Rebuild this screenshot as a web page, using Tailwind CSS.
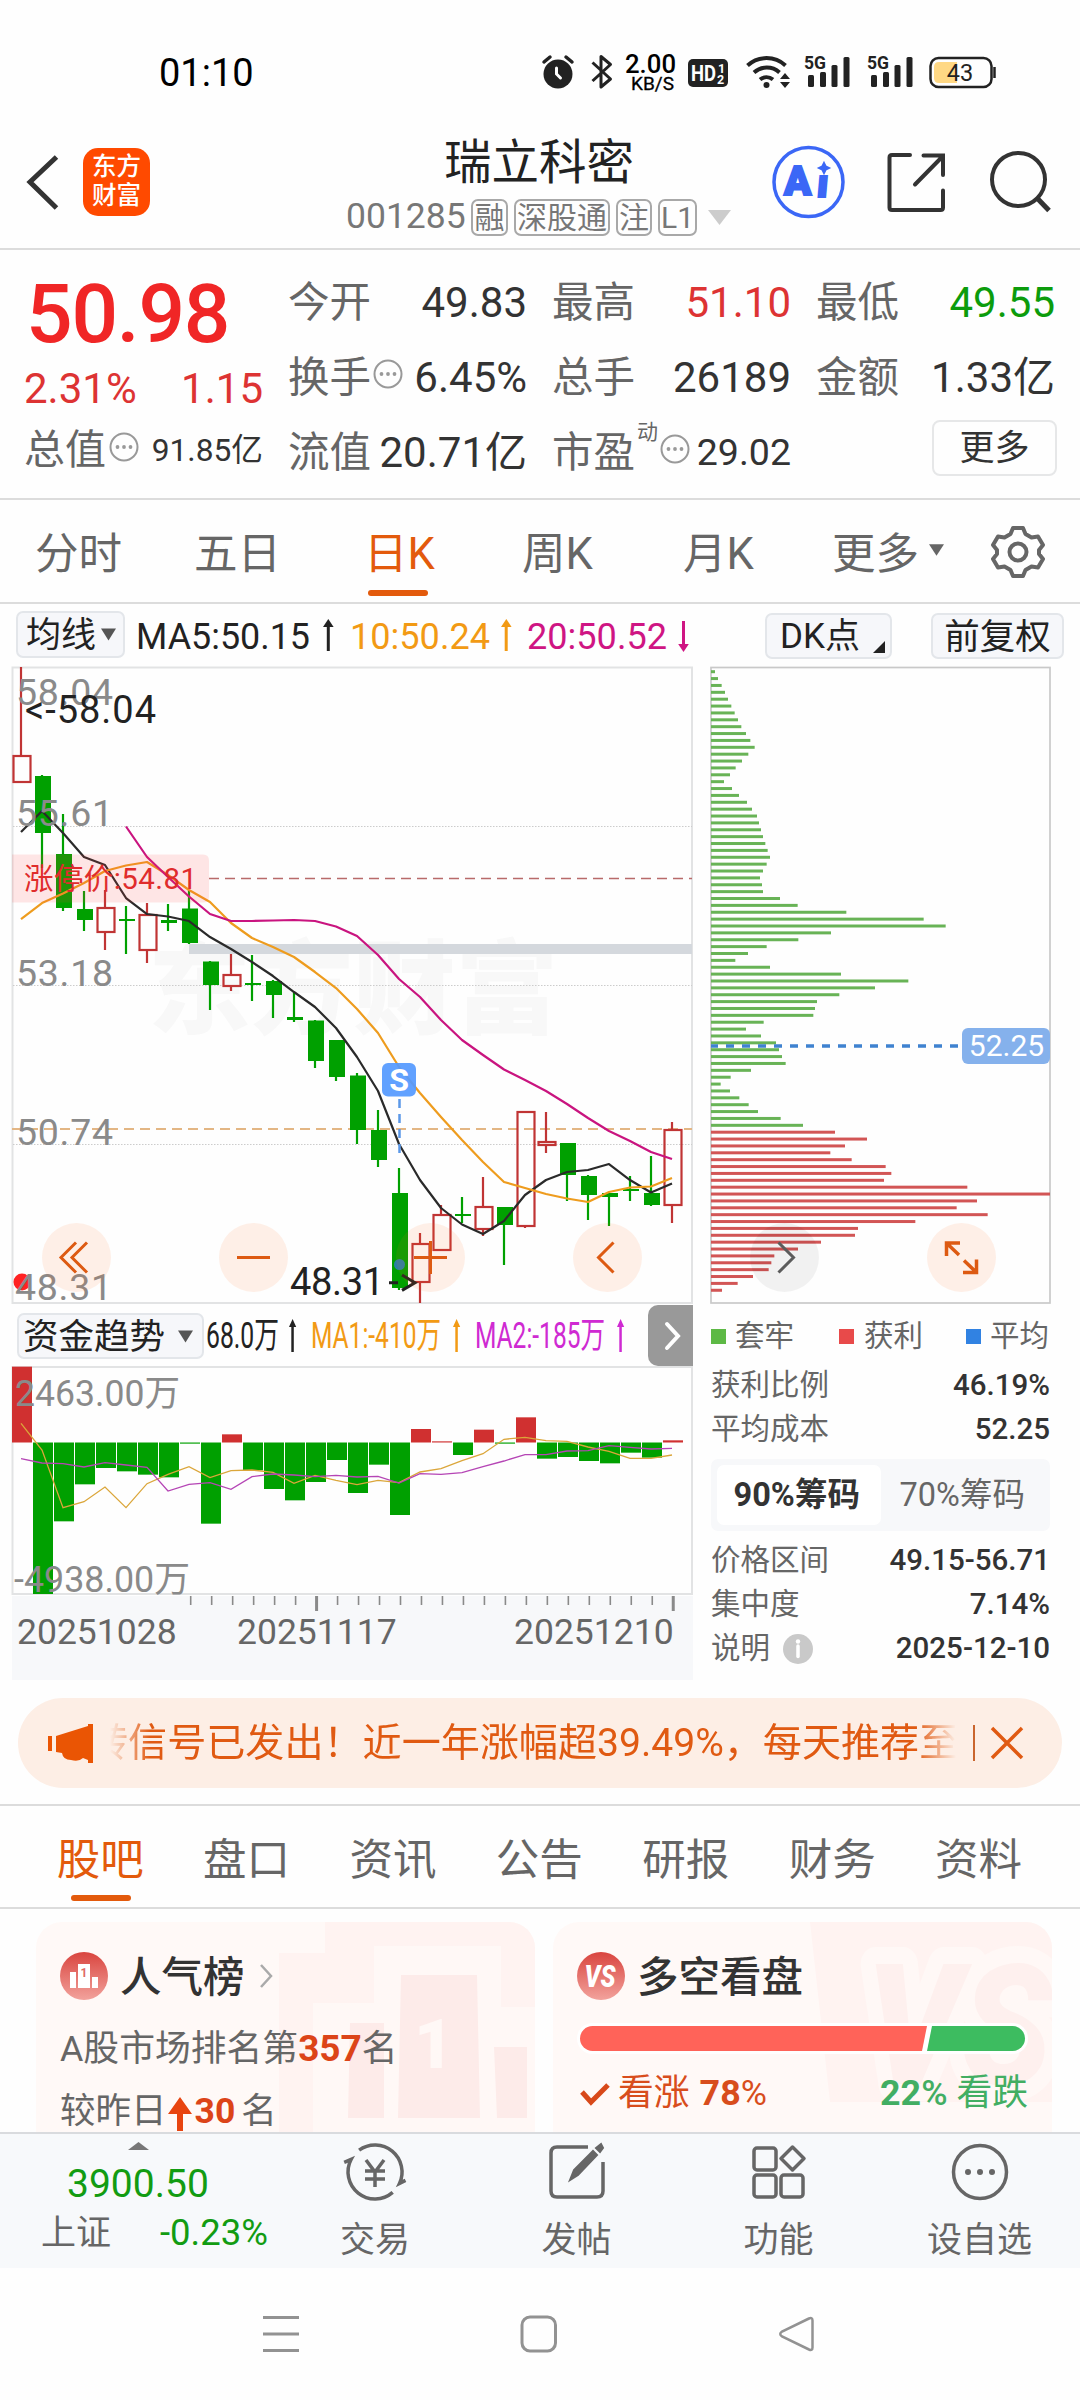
<!DOCTYPE html>
<html lang="zh-CN">
<head>
<meta charset="utf-8">
<title>瑞立科密 001285</title>
<script src="https://cdn.jsdelivr.net/npm/@tailwindcss/browser@4"></script>
</head>
<body class="bg-[#fefefe]">
<div class="w-[1080px] h-[2400px] overflow-hidden flex flex-col leading-none whitespace-nowrap text-[#666] font-['Roboto','Noto_Sans_CJK_SC',sans-serif]">

  <!-- status bar -->
  <div class="h-[122px] pt-[48px] pl-[159px] flex items-start">
    <div class="w-[379px] pt-[6px] text-[38px] text-black">01:10</div>
    <svg class="w-[470px] h-[52px]" viewBox="538 48 470 52" fill="none">
      <circle cx="558" cy="74" r="14.5" fill="#222"/>
      <path d="M544 62l6-5M572 62l-6-5" stroke="#222" stroke-width="3.5" stroke-linecap="round"/>
      <path d="M556.500 68v6l4 4" stroke="#fff" stroke-width="3" stroke-linecap="round"/>
      <path d="M592.500 62.500l18 16.500-9.500 8V56.500l9.500 8-18 16.500" stroke="#222" stroke-width="3" stroke-linejoin="round"/>
      <text x="625" y="73" font-size="25" font-weight="500" fill="#000" textLength="51" lengthAdjust="spacingAndGlyphs">2.00</text>
      <text x="631" y="90" font-size="18.500" fill="#000" stroke="#000" stroke-width=".3" textLength="43" lengthAdjust="spacingAndGlyphs">KB/S</text>
      <rect x="688" y="59" width="40" height="28" rx="5" fill="#222"/>
      <text x="691" y="81" font-size="22" font-weight="700" fill="#fff" textLength="25" lengthAdjust="spacingAndGlyphs">HD</text>
      <text x="718" y="73" font-size="12.500" font-weight="700" fill="#fff">1</text>
      <text x="717" y="84" font-size="12.500" font-weight="700" fill="#fff">2</text>
      <path d="M747.500 65.500a28 28 0 0 1 38 0M754 72.500a19 19 0 0 1 25.500 0M760 79.500a10.500 10.500 0 0 1 13 0" stroke="#222" stroke-width="4"/>
      <circle cx="766.500" cy="85" r="3" fill="#222"/>
      <path d="M780 79l5-6 5 6zM780 82l5 6 5-6z" fill="#222"/>
      <g fill="#222">
        <text x="804" y="69" font-size="18.500" font-weight="700" textLength="22" lengthAdjust="spacingAndGlyphs">5G</text>
        <rect x="808" y="75" width="6" height="12" rx="1.500"/><rect x="820" y="72" width="6" height="15" rx="1.500"/><rect x="831.500" y="65" width="6" height="22" rx="1.500"/><rect x="843.500" y="57" width="6" height="30" rx="1.500"/>
        <text x="867" y="69" font-size="18.500" font-weight="700" textLength="22" lengthAdjust="spacingAndGlyphs">5G</text>
        <rect x="871" y="75" width="6" height="12" rx="1.500"/><rect x="883" y="72" width="6" height="15" rx="1.500"/><rect x="894.500" y="65" width="6" height="22" rx="1.500"/><rect x="906.500" y="57" width="6" height="30" rx="1.500"/>
      </g>
      <rect x="930.500" y="58" width="61" height="29" rx="8" stroke="#222" stroke-width="2.500"/>
      <path d="M957 62h-18q-5 0-5 5v11q0 5 5 5h18z" fill="#ffd884"/>
      <path d="M994.500 67v11" stroke="#222" stroke-width="2.500"/>
      <text x="960" y="81" font-size="23.500" fill="#222" text-anchor="middle">43</text>
    </svg>
  </div>

  <!-- title bar -->
  <header class="h-[128px] border-b-2 border-[#dcdcdc] flex">
    <svg class="w-[83px] h-[126px]" viewBox="0 122 83 126" fill="none"><path d="M56.500 157L30 182l26.500 26" stroke="#333" stroke-width="5"/></svg>
    <div class="mt-[26px] w-[67px] h-[68px] rounded-[15px] bg-[#ff4a00] text-white font-medium text-[24.500px] leading-[29px] pt-[4px] text-center">东方<br>财富</div>
    <div class="ml-[196px] w-[387px] flex flex-col">
      <div class="text-[47.5px] text-[#222] pt-[18px] pl-[98px]">瑞立科密</div>
      <div class="mt-[11px] flex items-center text-[#777]">
        <span class="text-[35.5px] w-[125px] text-[#777]">001285</span>
        <div class="flex gap-[6px] text-[30px] *:h-[37px] *:border-2 *:border-[#a8a8a8] *:rounded-[7px] *:leading-[34px] *:text-center">
          <span class="w-[37px]">融</span><span class="w-[96px]">深股通</span><span class="w-[36px]">注</span><span class="w-[39px]">L1</span>
        </div>
        <svg class="ml-[11px] w-[23px] h-[15px]" viewBox="0 0 23 15"><path d="M0 0h23L11.500 15z" fill="#ccc"/></svg>
      </div>
    </div>
    <svg class="w-[340px] h-[126px]" viewBox="733 122 340 126" fill="none">
      <circle cx="808.500" cy="182" r="34.500" stroke="#3b67f6" stroke-width="3.500"/>
      <g fill="#3b67f6" stroke="#3b67f6" stroke-width="2" font-size="40" font-weight="900"><text x="784" y="195">A</text><text transform="translate(816 197) skewX(-5)">ı</text></g>
      <path d="M824 162.500l1.800 3.700 3.700 1.800-3.700 1.800-1.800 3.700-1.800-3.700-3.700-1.800 3.700-1.800z" fill="#3b67f6" stroke="#3b67f6" stroke-width="1.500"/>
      <path d="M910 155h-18q-2.500 0-2.500 2.500v50q0 2.500 2.500 2.500h48.500q2.500 0 2.500-2.500v-17M915 184.500l28-28.500M923.500 155.500h19.500v19.500" stroke="#333" stroke-width="4" stroke-linecap="round"/>
      <circle cx="1018.500" cy="179.500" r="26.500" stroke="#333" stroke-width="4"/><path d="M1037 198l12 12.500" stroke="#333" stroke-width="5"/>
    </svg>
  </header>

  <!-- quote summary -->
  <section class="h-[250px] border-b-2 border-[#dcdcdc] pl-[25px] grid grid-cols-[263px_264px_264px_239px] text-[42px] text-[#333]">
    <div class="w-[238px] h-[248px] flex flex-col">
      <div class="pt-[23px] text-[82px] font-medium text-[#f02626] tracking-[-1.2px] pl-[1px]">50.98</div>
      <div class="mt-[13px] -ml-[1px] flex justify-between text-[#dd3333]"><span>2.31%</span><span>1.15</span></div>
      <div class="mt-[20px] -ml-[1px] flex items-center"><span class="text-[#666] text-[41px]">总值</span>
        <svg class="ml-[3px] w-[30px] h-[30px] -mt-[8px]" viewBox="0 0 30 30"><use href="#dots"/></svg><span class="ml-auto text-[31.7px]">91.85亿</span></div>
    </div>
    <div class="w-[239px] pt-[32px] flex flex-col gap-[33px]">
      <div class="flex justify-between"><span class="text-[#666] text-[41.5px]">今开</span><span>49.83</span></div>
      <div class="flex items-center"><span class="text-[#666] text-[41.5px]">换手</span><svg class="ml-[2px] w-[30px] h-[30px] -mt-[8px]" viewBox="0 0 30 30"><use href="#dots"/></svg><span class="ml-auto">6.45%</span></div>
      <div class="flex justify-between"><span class="text-[#666] text-[41.5px]">流值</span><span>20.71亿</span></div>
    </div>
    <div class="w-[239px] pt-[32px] flex flex-col gap-[33px]">
      <div class="flex justify-between"><span class="text-[#666] text-[41.5px]">最高</span><span class="text-[#dd3333]">51.10</span></div>
      <div class="flex justify-between"><span class="text-[#666] text-[41.5px]">总手</span><span>26189</span></div>
      <div class="flex items-center"><span class="text-[#666] text-[41.5px]">市盈</span><span class="ml-[2px] -mt-[40px] text-[21px] text-[#666]">动</span><svg class="ml-[2px] w-[30px] h-[30px] -mt-[8px]" viewBox="0 0 30 30"><use href="#dots"/></svg><span class="ml-auto text-[37.5px]">29.02</span></div>
    </div>
    <div class="w-[239px] pt-[32px] flex flex-col gap-[33px]">
      <div class="flex justify-between"><span class="text-[#666] text-[41.5px]">最低</span><span class="text-[#0c9c0c]">49.55</span></div>
      <div class="flex justify-between"><span class="text-[#666] text-[41.5px]">金额</span><span>1.33亿</span></div>
      <div class="-mt-[12px] ml-auto -mr-[2px] w-[125px] h-[56px] border-2 border-[#e6e7e8] rounded-[8px] text-center text-[35px] leading-[54px]">更多</div>
    </div>
  </section>

  <!-- period tabs -->
  <nav class="h-[104px] border-b-2 border-[#dcdcdc] flex text-[43.5px] pt-[33px]">
    <span class="pl-[35px] w-[160px]">分时</span>
    <span class="pl-[34px] w-[160px]">五日</span>
    <span class="pl-[44px] w-[163px] text-[#e35a0c] flex flex-col">日K<i class="mt-[13px] ml-[4px] w-[60px] h-[6px] rounded-[3px] bg-[#e35a0c]"></i></span>
    <span class="pl-[39px] w-[160px]">周K</span>
    <span class="pl-[40px] w-[160px]">月K</span>
    <span class="pl-[29px] w-[116px]">更多</span>
    <svg class="ml-[10px] mt-[11px] w-[15px] h-[12px]" viewBox="0 0 17 13"><path d="M0 0h17l-8.500 13z" fill="#666"/></svg>
    <svg class="ml-[46px] -mt-[9px] w-[56px] h-[56px]" viewBox="-28 -28 56 56" fill="none" stroke="#666" stroke-width="4" stroke-linejoin="round">
      <path d="M-5-24h10l2.500 6 6 3.500 6.500-1 5 8.500-4 5v4l4 5-5 8.500-6.500-1-6 3.500L5 24H-5l-2.500-6-6-3.500-6.500 1-5-8.500 4-5v-4l-4-5 5-8.500 6.500 1 6-3.500z"/><circle r="8.500"/>
    </svg>
  </nav>

  <!-- moving-average row -->
  <div class="h-[62px] pt-[7px] flex items-start text-[#222]">
    <div class="ml-[16px] w-[109px] h-[47px] border-2 border-[#e3e6ea] rounded-[7px] bg-[#f6f7fa] pl-[8px] text-[35px] leading-[44px] flex items-center"><span class="pt-[2px]">均线</span><svg class="ml-[5px] w-[15px] h-[13px]" viewBox="0 0 15 12"><path d="M0 0h15L7.500 12z" fill="#555"/></svg></div>
    <svg class="w-[641px] h-[47px]" viewBox="125 611 641 47" font-size="36">
      <g fill="#222" stroke="none"><text x="136" y="648.500" textLength="174" lengthAdjust="spacingAndGlyphs">MA5:50.15</text><path d="M326.800 625h3v26h-3z"/><path d="M323 627l5.300-8 5.300 8z"/></g>
      <g fill="#f29a14"><text x="350" y="648.500" textLength="140" lengthAdjust="spacingAndGlyphs">10:50.24</text><path d="M504.700 625h3v26h-3z"/><path d="M501 627l5.300-8 5.300 8z"/></g>
      <g fill="#cf1583"><text x="527" y="648.500" textLength="140" lengthAdjust="spacingAndGlyphs">20:50.52</text><path d="M682 621h3v26h-3z"/><path d="M678.200 644l5.300 8 5.300-8z"/></g>
    </svg>
    <div class="mt-[2px] -ml-[1px] w-[127px] h-[46px] border-2 border-[#e3e6ea] rounded-[7px] bg-[#f6f7fa] pl-[13px] text-[35px] leading-[44px] flex">DK点<svg class="ml-[13px] mt-[26px] w-[12px] h-[12px]" viewBox="0 0 12 12"><path d="M12 0v12H0z" fill="#222"/></svg></div>
    <div class="mt-[2px] ml-[39px] w-[133px] h-[46px] border-2 border-[#e3e6ea] rounded-[7px] bg-[#f6f7fa] text-center text-[35.5px] leading-[44px]">前复权</div>
  </div>

  <!-- charts -->
  <main class="h-[1014px] flex">
    <div class="w-[700px] flex flex-col">
      <svg class="w-[700px] h-[638px]" viewBox="0 666 700 638" fill="none">
        <text x="148" y="1026" font-size="102" font-weight="900" fill="#f8f8f8" textLength="410" lengthAdjust="spacingAndGlyphs">东方财富</text>
        <rect x="12.500" y="667.500" width="679.500" height="635.500" stroke="#e2e3e4" stroke-width="2"/>
        <path d="M13 826.500h679M13 985.500h679M13 1144.500h679" stroke="#ccc" stroke-width="1" stroke-dasharray="1.500 1.500"/>
        <rect x="189" y="944" width="503" height="10" fill="#d4d8dd"/>
        <path d="M209 878.500h483" stroke="#b86a6a" stroke-width="1.700" stroke-dasharray="10 6"/>
        <path d="M12 1129h680" stroke="#e3b684" stroke-width="2" stroke-dasharray="10 6"/>
        <circle cx="22" cy="1282" r="8.500" fill="#f22"/>
        <g id="candles"></g>
        <g id="ma" stroke-width="2.200" stroke-linejoin="round"></g>
        <g font-size="37.500" fill="#8a8a8a"><text x="16" y="705" textLength="97">58.04</text><text x="16" y="826" textLength="97">55.61</text><text x="16" y="985.500" textLength="97">53.18</text><text x="16" y="1145" textLength="97">50.74</text><text x="15" y="1300" textLength="97">48.31</text></g>
        <path d="M12 854.500h191q6 0 6 6v36q0 6-6 6H12z" fill="#ff4040" fill-opacity=".13"/>
        <text x="24" y="889" font-size="29.500" fill="#e02c2c" textLength="173">涨停价:54.81</text>
        <g font-size="38" fill="#222"><text x="25" y="723" textLength="131">&lt;-58.04</text><text x="290" y="1295" textLength="94">48.31</text><path d="M389 1282.700h9M402 1275l13 7.700-13 7.700" fill="none" stroke="#222" stroke-width="3"/></g>
        <path d="M399.500 1099v56" stroke="#5b98e8" stroke-width="2.500" stroke-dasharray="9 6"/>
        <rect x="382" y="1063" width="34" height="33.500" rx="6" fill="#559aff" fill-opacity=".93"/>
        <text x="399" y="1091" font-size="32" font-weight="700" fill="#fff" text-anchor="middle">S</text>
        <circle cx="399.500" cy="1264.500" r="5.500" fill="#2a7fa5"/>
        <g fill="#ff6a20" fill-opacity=".1"><circle cx="76.500" cy="1257.500" r="34.500"/><circle cx="253.500" cy="1257.500" r="34.500"/><circle cx="430.500" cy="1257.500" r="34.500"/><circle cx="607.500" cy="1257.500" r="34.500"/></g>
        <path d="M76 1242.500l-15 15 15 15M87 1242.500l-15 15 15 15M237 1257.500h33M414 1257.500h33M430.500 1241v33M613.500 1242.500l-15 15 15 15" stroke="#dd5a12" stroke-width="3"/>
      </svg>
      <div class="h-[62px] pt-[9px] pl-[17px] flex items-start">
        <div class="w-[187px] h-[46px] border-2 border-[#e3e6ea] rounded-[7px] bg-[#f6f7fa] pl-[4px] text-[35.5px] leading-[44px] text-[#222] flex items-center"><span class="pt-[1px]">资金趋势</span><svg class="ml-[13px] w-[15px] h-[13px]" viewBox="0 0 15 12"><path d="M0 0h15L7.500 12z" fill="#555"/></svg></div>
        <svg class="w-[444px] h-[47px]" viewBox="204 1313 444 47" font-size="36">
          <g fill="#222"><text x="206" y="1348" textLength="73" lengthAdjust="spacingAndGlyphs">68.0万</text><path d="M291.300 1324h2.500v28h-2.500z"/><path d="M289 1327l3.600-8 3.600 8z"/></g>
          <g fill="#f29a14"><text x="311" y="1348" textLength="130" lengthAdjust="spacingAndGlyphs">MA1:-410万</text><path d="M455.300 1324h2.500v28h-2.500z"/><path d="M453 1327l3.600-8 3.600 8z"/></g>
          <g fill="#cf2ad2"><text x="475" y="1348" textLength="130" lengthAdjust="spacingAndGlyphs">MA2:-185万</text><path d="M619.300 1324h2.500v28h-2.500z"/><path d="M617 1327l3.600-8 3.600 8z"/></g>
        </svg>
        <div class="-mt-[8px] w-[45px] h-[61px] rounded-l-[10px] bg-[#999]"><svg class="w-[45px] h-[61px]" viewBox="648 1305 45 61" fill="none"><path d="M667 1324l11 12-11 12" stroke="#fff" stroke-width="4" stroke-linecap="round"/></svg></div>
      </div>
      <svg class="w-[700px] h-[314px]" viewBox="0 1366 700 314" fill="none">
        <rect x="12" y="1596" width="681" height="84" fill="#f7f8fa"/>
        <rect x="12.500" y="1367" width="679.500" height="227" stroke="#e2e3e4" stroke-width="2"/>
        <g id="flow"></g>
        <g font-size="36" fill="#8a8a8a"><text x="15" y="1406" textLength="165" lengthAdjust="spacingAndGlyphs">2463.00万</text><text x="14" y="1592" textLength="176" lengthAdjust="spacingAndGlyphs">-4938.00万</text></g>
        <g id="ticks" stroke="#8a8a8a"></g>
        <g font-size="35.500" fill="#666"><text x="17" y="1644">20251028</text><text x="237" y="1644">20251117</text><text x="514" y="1644">20251210</text></g>
      </svg>
    </div>

    <div class="w-[380px] flex flex-col text-[29.5px]">
      <svg class="w-[380px] h-[638px]" viewBox="700 666 380 638" fill="none">
        <rect x="711" y="667.500" width="339" height="635.500" stroke="#c9c9c9" stroke-width="1.700"/>
        <g id="chips"></g>
        <path d="M711 1046h252" stroke="#3f82d0" stroke-width="3.500" stroke-dasharray="8 8" stroke-dashoffset="1"/>
        <rect x="962" y="1028" width="88" height="36" rx="6" fill="#85b1ec"/>
        <text x="1006.500" y="1056" font-size="30" fill="#fff" text-anchor="middle">52.25</text>
        <circle cx="784.500" cy="1257.500" r="34.500" fill="#000" fill-opacity=".05"/><path d="M778.500 1242.500l15 15-15 15" stroke="#5c5c5c" stroke-width="3"/>
        <circle cx="961.500" cy="1257.500" r="34.500" fill="#ff6a20" fill-opacity=".1"/>
        <path d="M960 1243h-13.500v13M947 1243.500l12 11.500M963 1272.500h13.500v-13M976 1272l-12-11.500" stroke="#dd5a12" stroke-width="3.500"/>
      </svg>
      <div class="pl-[11px] w-[350px]">
        <div class="flex mt-[18px] items-center">
          <i class="w-[15px] h-[15px] bg-[#5db945]"></i><span class="ml-[9px] w-[104px]">套牢</span>
          <i class="w-[15px] h-[15px] bg-[#e84a4a]"></i><span class="ml-[10px] w-[102px]">获利</span>
          <i class="w-[15px] h-[15px] bg-[#3182e2]"></i><span class="ml-[9px]">平均</span>
        </div>
        <div class="mt-[19px] flex justify-between"><span>获利比例</span><b class="font-medium text-[#333]">46.19%</b></div>
        <div class="mt-[15px] flex justify-between"><span>平均成本</span><b class="font-medium text-[#333]">52.25</b></div>
        <div class="mt-[14px] h-[72px] w-[339px] rounded-[7px] bg-[#f7f8fa] p-[6px] flex text-[32.5px] leading-[61px] text-center">
          <span class="w-[164px] h-[60px] rounded-[7px] bg-white font-bold text-[#333] -indent-[4px]">90%筹码</span><span class="w-[164px]">70%筹码</span>
        </div>
        <div class="mt-[15px] flex justify-between"><span>价格区间</span><b class="font-medium text-[#333]">49.15-56.71</b></div>
        <div class="mt-[15px] flex justify-between"><span>集中度</span><b class="font-medium text-[#333]">7.14%</b></div>
        <div class="mt-[14px] flex items-center"><span>说明</span>
          <svg class="ml-[13px] w-[30px] h-[30px]" viewBox="0 0 30 30"><circle cx="15" cy="15" r="15" fill="#c9c9c9"/><path d="M15 12v10.500" stroke="#fff" stroke-width="3.500" stroke-linecap="round"/><circle cx="15" cy="7.500" r="2.200" fill="#fff"/></svg>
          <b class="ml-auto font-medium text-[#333]">2025-12-10</b></div>
      </div>
    </div>
  </main>

  <!-- promotion banner -->
  <div class="mt-[18px] mx-[18px] h-[90px] rounded-[45px] bg-[#fdeee5] flex items-center text-[#e05a12]">
    <svg class="w-[50px] h-[44px] ml-[28px] -mt-[1px]" viewBox="46 1720 50 44"><path d="M48 1735h4v15h-4zM56 1735l32-10v-2h5v39h-5v-3l-5-2q-4 4-12 2-8 0-9-7l-6-1z" fill="#ea5504"/></svg>
    <div class="ml-[14px] w-[846px] overflow-hidden text-[39.100px] leading-[60px] [mask-image:linear-gradient(90deg,transparent,black_40px,black_806px,transparent)]"><div class="-ml-[21px]">转信号已发出！近一年涨幅超39.49%，每天推荐至</div></div>
    <i class="ml-[17px] w-[2px] h-[36px] bg-[#c9652e]"></i>
    <svg class="ml-[15px] w-[34px] h-[34px]" viewBox="0 0 34 34"><path d="M2 2l30 30M32 2L2 32" stroke="#e05a12" stroke-width="3.500"/></svg>
  </div>

  <!-- content tabs -->
  <nav class="mt-[16px] h-[105px] border-y-2 border-[#dcdcdc] pl-[27px] flex text-[43.5px] pt-[33px] text-center *:w-[146.4px]">
    <span class="text-[#e35a0c] flex flex-col items-center">股吧<i class="mt-[12px] ml-[2px] w-[60px] h-[6px] rounded-[3px] bg-[#e35a0c]"></i></span>
    <span>盘口</span><span>资讯</span><span>公告</span><span>研报</span><span>财务</span><span>资料</span>
  </nav>

  <!-- cards -->
  <section class="h-[223px] pt-[13px] pl-[36px] flex gap-[18px] overflow-hidden">
    <div class="relative w-[499px] h-[260px] rounded-[26px] overflow-hidden bg-[#fff9f7]">
      <svg class="absolute inset-0 w-[499px] h-[260px]" viewBox="36 1922 499 260">
        <path d="M279 2182v-229h46v-31h220v260z" fill="#fff3f1"/><path d="M313 2182v-179h61v-57h127v61h34v175z" fill="#fff8f6"/>
        <path d="M350 2023h34v95h-36zM401 1975h76l3 143h-82zM494 2047h33v71h-30z" fill="#fdebe9"/>
        <text x="414" y="2068" font-size="68" font-weight="900" fill="#fff8f6">1</text>
      </svg>
      <div class="relative pl-[24px] pt-[30px]">
        <div class="flex items-center text-[41.5px] font-medium text-[#333]">
          <svg class="w-[48px] h-[48px]" viewBox="0 0 48 48"><circle cx="24" cy="24" r="24" fill="url(#rg)"/><path d="M10 20h6v16h-6zM18 12h12v24H18zM32 25h6v11h-6z" fill="#fff"/><text x="24" y="25" font-size="12" font-weight="700" fill="#e06a64" text-anchor="middle">1</text></svg>
          <span class="ml-[12px] pt-[4px]">人气榜</span>
          <svg class="ml-[14px] w-[14px] h-[24px]" viewBox="0 0 14 24" fill="none"><path d="M2 1l10 11L2 23" stroke="#aaa" stroke-width="2.500"/></svg>
        </div>
        <div class="mt-[30px] text-[35.8px]">A股市场排名第<b class="text-[#dc4418] text-[37px] leading-none">357</b>名</div>
        <div class="mt-[26px] text-[35.5px] flex">较昨日<svg class="ml-[1px] w-[24px] h-[34px] mt-[3px]" viewBox="0 0 24 34"><path d="M12 0l12 17h-9v17H9V17H0z" fill="#e8440f"/></svg><b class="ml-[3px] text-[#dc4418]">30</b><span class="ml-[6px]">名</span></div>
      </div>
    </div>
    <div class="relative w-[499px] h-[260px] rounded-[26px] overflow-hidden bg-[#fff9f7]">
      <svg class="absolute inset-0 w-[499px] h-[260px]" viewBox="553 1922 499 260">
        <path d="M810 1922h242v180H830z" fill="#fff3f1"/>
        <text x="866" y="2084" font-size="168" font-weight="900" font-style="italic" fill="#fef0ee" stroke="#fff8f6" stroke-width="34" stroke-linejoin="round" paint-order="stroke" textLength="186" lengthAdjust="spacingAndGlyphs">VS</text>
      </svg>
      <div class="relative pl-[24px] pt-[30px]">
        <div class="flex items-center text-[41.5px] font-medium text-[#333]">
          <svg class="w-[48px] h-[48px]" viewBox="0 0 48 48"><circle cx="24" cy="24" r="24" fill="url(#rg)"/><text x="23" y="35" font-size="31" font-weight="900" font-style="italic" fill="#fff" text-anchor="middle" textLength="31" lengthAdjust="spacingAndGlyphs">VS</text></svg>
          <span class="ml-[12px] pt-[4px]">多空看盘</span>
        </div>
        <svg class="mt-[22px] -ml-[1px] w-[454px] h-[33px]" viewBox="576 2022 454 33"><rect x="577" y="2023" width="451" height="31" rx="15.500" fill="#fff"/><path d="M927 2026H592.500a12.500 12.500 0 0 0 0 25H922z" fill="#ff6359"/><path d="M932 2026h80.500a12.500 12.500 0 0 1 0 25H927z" fill="#3dbc60"/></svg>
        <div class="mt-[21px] flex items-center text-[35.8px] text-[#d84d1c]">
          <svg class="ml-[3px] w-[31px] h-[24px]" viewBox="0 0 31 24" fill="none"><path d="M2 10l9 10L28 3" stroke="#d8491a" stroke-width="5"/></svg>
          <span class="ml-[7px]">看涨</span><b class="ml-[10px]">78</b><span>%</span>
          <span class="ml-auto mr-[24px] text-[#42ae63]"><b>22</b><span class="font-medium">%</span> 看跌</span>
        </div>
      </div>
    </div>
  </section>

  <!-- bottom bar -->
  <footer class="h-[136px] border-t-2 border-[#d9dbde] bg-[#f7f9fb] flex">
    <div class="w-[275px] h-[134px] flex flex-col">
      <svg class="ml-[128px] mt-[8px] w-[21px] h-[8px]" viewBox="0 0 21 8"><path d="M0 8L10.500 0 21 8z" fill="#777"/></svg>
      <div class="mt-[15px] ml-[67px] text-[39px] text-[#129c12]">3900.50</div>
      <div class="mt-[12px] flex items-center"><span class="ml-[41px] text-[35px]">上证</span><span class="ml-[49px] text-[36.5px] text-[#129c12] -mt-[1px]">-0.23%</span></div>
    </div>
    <div class="w-[200px] flex flex-col items-center text-[35px]">
      <svg class="w-[68px] h-[64px] mt-[6px]" viewBox="-34 -32 68 64" fill="none" stroke="#666" stroke-width="3.500"><path d="M-15.900-21.800A27 27 0 0 1 24.500 11.400l6-3M17.700 20.400A27 27 0 0 1-23.800-12.700l-7 3M-9-12l9 12 9-12M-10-1h20M-10 7h20M0 0v15"/></svg><span class="mt-[19px]">交易</span>
    </div>
    <div class="w-[203px] flex flex-col items-center text-[35px]">
      <svg class="w-[68px] h-[64px] mt-[6px]" viewBox="-34 -32 68 64" fill="none" stroke="#666" stroke-width="3.500"><path d="M11-25h-31q-6 0-6 6v38q0 6 6 6h40q6 0 6-6v-29"/><path d="M-7 8l4-10 19-19 4 4L1 3z" fill="#666" stroke-width="2"/><path d="M19-24l5-4 2 4-3 4z" fill="#666" stroke-width="2"/></svg><span class="mt-[19px]">发帖</span>
    </div>
    <div class="w-[201px] flex flex-col items-center text-[35px]">
      <svg class="w-[68px] h-[64px] mt-[6px]" viewBox="-34 -32 68 64" fill="none" stroke="#666" stroke-width="3.500" stroke-linejoin="round"><rect x="-25" y="-24" width="22" height="22" rx="3"/><rect x="-25" y="3" width="22" height="22" rx="3"/><rect x="2" y="3" width="22" height="22" rx="3"/><path d="M13.500-25L25-13.500 13.500-2 2-13.500z"/></svg><span class="mt-[19px]">功能</span>
    </div>
    <div class="w-[201px] flex flex-col items-center text-[35px]">
      <svg class="w-[68px] h-[64px] mt-[6px]" viewBox="-34 -32 68 64"><circle r="26.500" fill="none" stroke="#666" stroke-width="3.500"/><g fill="#666"><circle cx="-12" r="3"/><circle r="3"/><circle cx="12" r="3"/></g></svg><span class="mt-[19px]">设自选</span>
    </div>
  </footer>

  <!-- system navigation -->
  <div class="h-[132px]">
    <svg class="w-[1080px] h-[132px]" viewBox="0 2268 1080 132" fill="none" stroke="#929292" stroke-width="3"><path d="M263 2317.500h36M263 2334h36M263 2350.500h36"/><rect x="522" y="2317" width="33.500" height="34" rx="8"/><path d="M809 2318.500l-27 13q-3.500 2.500 0 5l27 13q3.500 1.500 3.500-2v-27q0-3.500-3.500-2z" stroke-width="2.500"/></svg>
  </div>
</div>

<svg class="hidden"><defs>
  <g id="dots"><circle cx="15" cy="15" r="13.500" fill="none" stroke="#999" stroke-width="2"/><g fill="#999"><circle cx="8.500" cy="15" r="1.900"/><circle cx="15" cy="15" r="1.900"/><circle cx="21.500" cy="15" r="1.900"/></g></g>
</defs></svg>
<svg class="absolute w-0 h-0"><defs><linearGradient id="rg" x1="0" y1="0" x2="0" y2="1"><stop offset="0" stop-color="#d9453f"/><stop offset="1" stop-color="#f2a29c"/></linearGradient></defs></svg>

<script>
const put = (id, html) => { document.getElementById(id).innerHTML = html; };
const X = i => 21 + 21 * i;
const line = (ys, start, color, w) => `<path d="M${ys.map((y, i) => X(i + start) + ' ' + y).join('L')}" stroke="${color}"${w ? ` stroke-width="${w}"` : ''}/>`;

// [up?, high, body top, body bottom, low]
const K = [[1,667,755,782,782],[0,775,776,833,868],[0,814,854,908,911],[0,891,909,920,931],[1,890,907,932,950],[0,906,919,921,954],[1,903,914,950,963],[0,904,920,923,931],[0,890,908.5,943,944],[0,961,961.5,985,1010],[1,954,974,986,991],[0,955,983,985,1001],[0,980,981,995,1018],[0,992,1017,1020,1022],[0,1020,1020.5,1061,1068],[0,1040,1040,1077,1081],[0,1073,1075.5,1130,1144],[0,1110,1130,1160,1167],[0,1168,1193,1288,1290],[1,1233,1243,1282,1303],[1,1205,1214,1250,1250],[0,1197,1214,1216,1223],[1,1177,1206,1229,1236],[0,1207,1207,1225,1265],[1,1111,1111,1226,1228],[1,1112,1141,1145,1153],[0,1143,1143,1175,1201],[0,1175,1176,1195,1220],[0,1193,1193,1197,1226],[0,1176,1189,1191,1201],[0,1156,1193,1205,1206],[1,1122,1129,1205,1223]];
put('candles', K.map(([up, h, t, b, l], i) => {
  const x = X(i), c = up ? '#c03434' : '#00a000';
  const wick = up ? `M${x} ${h}V${t}M${x} ${b}V${l}` : `M${x} ${h}V${l}`;
  return `<path d="${wick}" stroke="${c}" stroke-width="2.2"/>` + (up ? `<rect x="${x - 7.5}" y="${t + 1}" width="17" height="${b - t - 1}" stroke="${c}" stroke-width="2.2"/>` : `<rect x="${x - 7}" y="${t}" width="16" height="${b - t}" fill="${c}"/>`);
}).join(''));
put('ma',
  line([832,811,833,857,865,898,914,916.5,921,937,949,962,976,992,1007,1028,1057,1091,1144,1180,1208,1224.5,1234,1221,1195,1180,1172,1170,1164,1180,1192.5,1183.5], 0, '#2a2a2a') +
  line([919,903,893.5,883,871,865.5,862,875,890,902,923,938,947,957,972,988,1009,1033,1067,1093,1117,1140,1162,1182,1188,1194,1198.5,1202,1192,1187.5,1186.5,1178], 0, '#ee9c1e') +
  line([826.5,857,877,896.5,914,921,921,920.5,920,921,926.5,936,955,979,997,1020,1040,1055,1069.5,1080,1091,1104,1118,1131,1141,1152,1159], 5, '#c9147f'));

// money flow: bar end per day, thirds of a pixel below y=1300
const F = [200,882,664,553,504,514,524,532,431,671,403,511,567,601,546,480,579,494,645,387,424,465,389,431,352,476,471,483,490,458,473,421];
const px = v => 1300 + v / 3, Z = 1442.5;
put('flow', F.map((v, i) => { const y = px(v), up = y < Z; return `<rect x="${12 + 21 * i}" y="${up ? y : Z}" width="20" height="${Math.abs(y - Z)}" fill="${up ? '#d03030' : '#00a000'}"/>`; }).join('') +
  line([370,450,623,605,561,623,551,523,500,533,512,510,517,550,526,541,554,541,548,516,506,482,461,418,412,422,424,441,454,475,475,465].map(px), 0, '#dba63a', 1.3) +
  line([476,489,491,501,488,495,502,573,553,548,568,530,522,525,530,526,531,529,549,521,523,518,500,483,464,464,453,452,437,442,447,445].map(px), 0, '#b545b5', 1.3));
put('ticks', Array.from({length: 24}, (_, i) => { const big = i === 6 || i === 23; return `<path d="M${190.7 + i * 20.98} 1596v${big ? 15 : 9}" stroke-width="${big ? 3 : 1.6}"/>`; }).join(''));

// chip distribution, top price first
const C = [75,84,95,105,114,124,134,144,154,168,181,194,175,156,137,120,102,126,147,171,186,201,207,213,219,226,233,240,230,219,210,216,219,270,323,469,701,767,423,325,230,174,136,240,453,655,555,448,381,375,370,221,168,213,258,267,276,287,183,122,92,120,148,176,204,272,339,435,531,465,421,485,587,604,582,832,1080,861,800,893,676,504,495,393,324,253,244,236,189,143,96];
put('chips', C.map((v, i) => `<rect x="711" y="${670.2 + i * 6.873}" width="${(v - 63) / 3}" height="3" fill="${i < 67 ? '#68b356' : '#d25555'}"/>`).join(''));
</script>
</body>
</html>
